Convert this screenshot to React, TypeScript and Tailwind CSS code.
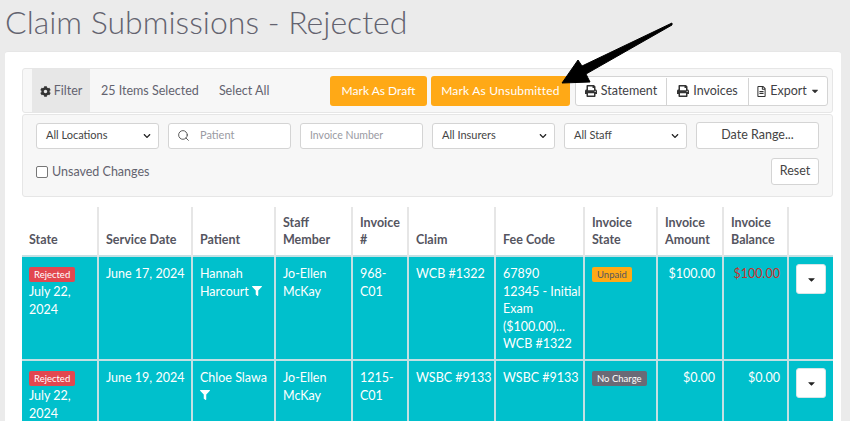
import { FaCog, FaPrint, FaRegFileAlt, FaFilter, FaCaretDown, FaChevronDown } from "react-icons/fa";
import { Search } from "lucide-react";

function Sel({ label, w }: { label: string; w: string }) {
  return (
    <div className={`${w} h-[26px] flex items-center justify-between pl-[9px] pr-[7px] bg-white border border-[#d4d4d4] rounded-[3px] text-[11px] text-[#444]`}>
      <span>{label}</span>
      <FaChevronDown className="text-[8px] text-[#222]" />
    </div>
  );
}

function Head({ lines, w }: { lines: string[]; w: string }) {
  return (
    <th className={`${w} border-l-2 first:border-l-0 border-[#e6e6e6] pl-[7px] pb-[6px] align-bottom text-left text-[12.5px] leading-[17.6px] font-bold text-[#55555f] whitespace-nowrap`}>
      {lines.map((l) => (
        <div key={l}>{l}</div>
      ))}
    </th>
  );
}

function Td({ children, right }: { children: React.ReactNode; right?: boolean }) {
  return (
    <td className={`border-l-2 first:border-l-0 border-[#c4e0e3] px-[7px] pt-[8px] align-top text-[12.5px] leading-[17.6px] text-white whitespace-nowrap ${right ? "text-right" : "text-left"}`}>
      {children}
    </td>
  );
}

function Badge({ text, cls }: { text: string; cls: string }) {
  return <span className={`inline-block h-[15px] leading-[15px] px-[5px] rounded-[2px] text-[9.5px] whitespace-nowrap ${cls}`}>{text}</span>;
}

function Caret() {
  return (
    <div className="w-[30px] h-[30px] mx-auto bg-white border border-[#d8e6e8] rounded-[3px] flex items-center justify-center">
      <FaCaretDown className="text-[11px] text-[#222]" />
    </div>
  );
}

function Rej() {
  return (
    <>
      <div className="h-[15px] mt-[2px] flex"><Badge text="Rejected" cls="bg-[#e2474f] text-white" /></div>
      <div className="mt-[1px]">July 22,<br />2024</div>
    </>
  );
}

function Row({ date, patient, inv, claim, fee, state, amt, bal, h }: { date: string; patient: React.ReactNode; inv: React.ReactNode; claim: string; fee: React.ReactNode; state: React.ReactNode; amt: string; bal: React.ReactNode; h: string }) {
  return (
    <tr className={`${h} bg-[#00c0cc] border-t-2 border-[#c4e0e3]`}>
      <Td><Rej /></Td>
      <Td>{date}</Td>
      <Td>{patient}</Td>
      <Td>Jo-Ellen<br />McKay</Td>
      <Td>{inv}</Td>
      <Td>{claim}</Td>
      <Td>{fee}</Td>
      <Td><div className="h-[15px] mt-[2px] flex">{state}</div></Td>
      <Td right>{amt}</Td>
      <Td right>{bal}</Td>
      <td className="border-l-2 border-[#c4e0e3] pt-[7px] align-top"><Caret /></td>
    </tr>
  );
}

export default function App() {
  return (
    <div className="relative w-[850px] h-[421px] overflow-hidden bg-[#ebebeb] font-['Lato','Liberation_Sans',sans-serif]">
      <h1 className="h-[51px] pl-[5px] pt-[1px] text-[32px] leading-[42px] font-light text-[#63636f]">
        Claim Submissions - Rejected
      </h1>
      <div className="ml-[5px] w-[836px] h-[370px] bg-white rounded-t-[3px] border-t border-[#e6e6e6] pt-[16px] pl-[17px]">
        <div className="w-[811px] h-[45px] flex items-center pl-[9px] pr-[4px] bg-[#f7f7f7] border border-[#e6e6e6] rounded-[3px] text-[12.5px] text-[#63636f]">
          <div className="w-[58px] h-full flex items-center justify-center gap-[3px] pt-[1px] bg-[#e7e7e7]">
            <FaCog className="text-[11px] text-[#333]" />
            <span>Filter</span>
          </div>
          <span className="ml-[11px] pt-[1px]">25 Items Selected</span>
          <span className="ml-[20px] pt-[1px]">Select All</span>
          <div className="ml-auto flex items-center h-[30px]">
            <div className="w-[97px] h-full flex items-center justify-center bg-[#ffa916] rounded-[3px] text-white text-[12px]">Mark As Draft</div>
            <div className="ml-[4px] w-[139px] h-full flex items-center justify-center bg-[#ffa916] rounded-[3px] text-white text-[12px] tracking-[0.2px]">Mark As Unsubmitted</div>
            <div className="ml-[5px] h-full flex pt-[1px] bg-white border border-[#d4d4d4] rounded-[3px] text-[#3f3f46]">
              <div className="w-[90px] flex items-center justify-center gap-[4px]"><FaPrint className="text-[12px] text-[#333]" />Statement</div>
              <div className="w-[82px] flex items-center justify-center gap-[4px] border-l border-[#d4d4d4]"><FaPrint className="text-[12px] text-[#333]" />Invoices</div>
              <div className="w-[79px] flex items-center justify-center gap-[3px] border-l border-[#d4d4d4]"><FaRegFileAlt className="text-[11px] text-[#333]" />Export<FaCaretDown className="text-[10px] text-[#333]" /></div>
            </div>
          </div>
        </div>
        <div className="w-[811px] h-[83px] mt-[1px] bg-[#f7f7f7] border border-[#e6e6e6] rounded-[3px] pl-[13px] pr-[13px] pt-[7px] text-[12px]">
          <div className="flex items-center gap-[9px] h-[27px]">
            <Sel label="All Locations" w="w-[123px]" />
            <div className="w-[123px] h-[26px] flex items-center bg-white border border-[#d4d4d4] rounded-[3px] text-[#9a9aa2]">
              <Search size={13} strokeWidth={1.6} className="ml-[8px] text-[#444]" />
              <span className="ml-[10px] text-[11px]">Patient</span>
            </div>
            <div className="w-[123px] h-[26px] flex items-center pl-[9px] bg-white border border-[#d4d4d4] rounded-[3px] text-[10.5px] text-[#9a9aa2]">Invoice Number</div>
            <Sel label="All Insurers" w="w-[123px]" />
            <Sel label="All Staff" w="w-[123px]" />
            <div className="w-[123px] h-[27px] flex items-center justify-center bg-white border border-[#d4d4d4] rounded-[3px] text-[12.5px] text-[#444]">Date Range...</div>
          </div>
          <div className="flex items-center justify-between mt-[9px] h-[27px]">
            <label className="flex items-center gap-[4px] pt-[2px] text-[12.5px] text-[#63636f]">
              <span className="w-[12px] h-[12px] -mt-[2px] bg-white border border-[#777] rounded-[2px]" />
              Unsaved Changes
            </label>
            <div className="w-[48px] h-[27px] flex items-center justify-center bg-white border border-[#d4d4d4] rounded-[3px] text-[12.5px] text-[#444]">Reset</div>
          </div>
        </div>
        <table className="w-[811px] mt-[10px] table-fixed border-collapse">
          <thead>
            <tr className="h-[49px]">
              <Head w="w-[76px]" lines={["State"]} />
              <Head w="w-[94px]" lines={["Service Date"]} />
              <Head w="w-[83px]" lines={["Patient"]} />
              <Head w="w-[77px]" lines={["Staff", "Member"]} />
              <Head w="w-[56px]" lines={["Invoice", "#"]} />
              <Head w="w-[87px]" lines={["Claim"]} />
              <Head w="w-[89px]" lines={["Fee Code"]} />
              <Head w="w-[73px]" lines={["Invoice", "State"]} />
              <Head w="w-[66px]" lines={["Invoice", "Amount"]} />
              <Head w="w-[65px]" lines={["Invoice", "Balance"]} />
              <Head w="w-[45px]" lines={[""]} />
            </tr>
          </thead>
          <tbody>
            <Row
              h="h-[104px]"
              date="June 17, 2024"
              patient={<>Hannah<br />Harcourt <FaFilter className="inline text-[10px] -mt-[2px]" /></>}
              inv={<>968-<br />C01</>}
              claim="WCB #1322"
              fee={<>67890<br />12345 - Initial<br />Exam<br />($100.00)...<br />WCB #1322</>}
              state={<Badge text="Unpaid" cls="bg-[#ffa916] text-[#55555f]" />}
              amt="$100.00"
              bal={<span className="text-[#c9302c]">$100.00</span>}
            />
            <Row
              h="h-[104px]"
              date="June 19, 2024"
              patient={<>Chloe Slawa<br /><FaFilter className="inline text-[10px] -mt-[2px]" /></>}
              inv={<>1215-<br />C01</>}
              claim="WSBC #9133"
              fee="WSBC #9133"
              state={<Badge text="No Charge" cls="bg-[#6a6a76] text-white" />}
              amt="$0.00"
              bal="$0.00"
            />
          </tbody>
        </table>
      </div>
      <svg className="absolute left-[555px] top-[18px]" width="124" height="72" viewBox="555 18 124 72">
        <path d="M672 23 L582 66 L578 60 L562 83 L590 82 L586 74 L672 25 Z" fill="#000" stroke="#000" strokeWidth="1" strokeLinejoin="round" />
      </svg>
    </div>
  );
}
